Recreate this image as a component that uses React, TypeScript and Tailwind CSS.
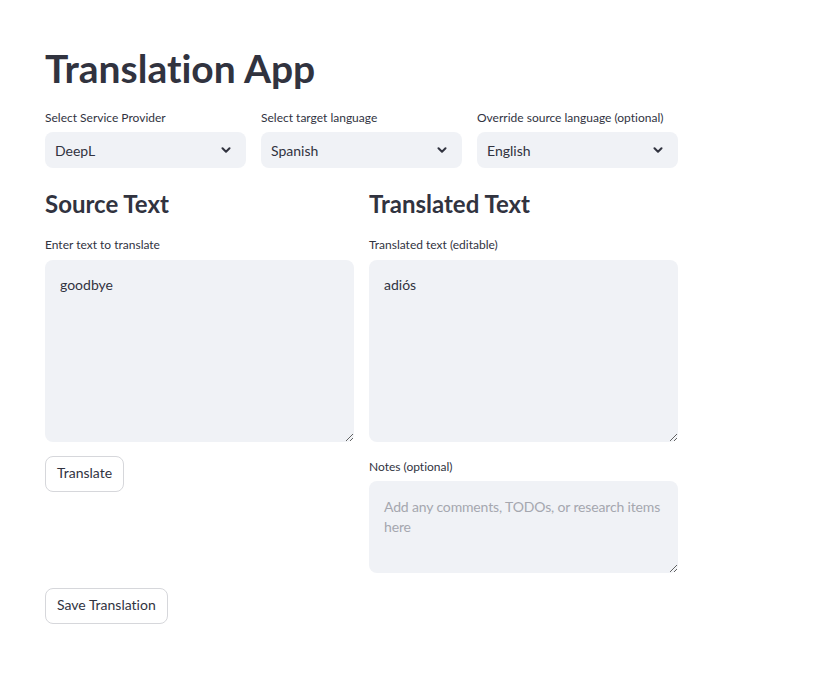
import { useState } from "react";

const PROVIDERS = ["DeepL", "Google", "Microsoft"];
const TARGETS = ["Spanish", "French", "German"];
const SOURCES = ["English", "Spanish", "French"];

function Chevron() {
  return (
    <svg width="10" height="7" viewBox="0 0 10 7" fill="none" className="shrink-0">
      <path d="M1.5 1.3 L5 4.8 L8.5 1.3" stroke="#31333F" strokeWidth="2" strokeLinecap="round" strokeLinejoin="round" />
    </svg>
  );
}

function SelectBox({ label, value }: { label: string; value: string }) {
  return (
    <div className="flex flex-col">
      <div className="text-[12px] leading-[14px] text-[#31333F]">{label}</div>
      <div className="mt-[7px] flex h-[36px] items-center justify-between rounded-[8px] bg-[#f0f2f6] pl-[10px] pr-[15px] text-[14px] text-[#31333F]">
        <span>{value}</span>
        <Chevron />
      </div>
    </div>
  );
}

function Button({ children }: { children: string }) {
  return (
    <button className="flex h-[36px] w-fit items-center rounded-[8px] border border-[#d6d7db] bg-white px-[11px] pb-[2px] text-[14px] leading-[20px] text-[#31333F]">
      {children}
    </button>
  );
}

export default function App() {
  const [source, setSource] = useState("goodbye");
  const [target, setTarget] = useState("adiós");
  const [notes, setNotes] = useState("");

  return (
    <div className="min-h-screen bg-white font-['Lato',sans-serif] text-[#31333F] [font-variant-ligatures:none]">
      <div className="w-[633px] ml-[45px] pt-[44px] pb-[60px]">
        <h1 className="text-[39px] leading-[48px] font-bold">Translation App</h1>

        <div className="mt-[19px] grid grid-cols-3 gap-[15px]">
          <SelectBox label="Select Service Provider" value={PROVIDERS[0]} />
          <SelectBox label="Select target language" value={TARGETS[0]} />
          <SelectBox label="Override source language (optional)" value={SOURCES[0]} />
        </div>

        <div className="mt-[20px] grid grid-cols-2 gap-[15px]">
          {/* Source column */}
          <div className="flex flex-col">
            <h3 className="text-[24px] leading-[32px] font-bold">Source Text</h3>
            <div className="mt-[18px] text-[12px] leading-[14px]">Enter text to translate</div>
            <textarea
              value={source}
              onChange={(e) => setSource(e.target.value)}
              className="mt-[8px] h-[182px] resize-y rounded-[8px] bg-[#f0f2f6] px-[15px] pt-[15px] text-[14px] leading-[20px] text-[#31333F] outline-none"
            />
            <div className="mt-[14px]">
              <Button>Translate</Button>
            </div>
          </div>

          {/* Translated column */}
          <div className="flex flex-col">
            <h3 className="text-[24px] leading-[32px] font-bold">Translated Text</h3>
            <div className="mt-[18px] text-[12px] leading-[14px]">Translated text (editable)</div>
            <textarea
              value={target}
              onChange={(e) => setTarget(e.target.value)}
              className="mt-[8px] h-[182px] resize-y rounded-[8px] bg-[#f0f2f6] px-[15px] pt-[15px] text-[14px] leading-[20px] text-[#31333F] outline-none"
            />
            <div className="mt-[18px] text-[12px] leading-[14px]">Notes (optional)</div>
            <textarea
              value={notes}
              onChange={(e) => setNotes(e.target.value)}
              placeholder={"Add any comments, TODOs, or research items\nhere"}
              className="mt-[7px] h-[92px] resize-y rounded-[8px] bg-[#f0f2f6] pl-[15px] pr-[6px] pt-[16px] text-[14px] leading-[20px] tracking-[-0.15px] text-[#31333F] outline-none placeholder:text-[#a5a7af]"
            />
          </div>
        </div>

        <div className="mt-[15px]">
          <Button>Save Translation</Button>
        </div>
      </div>
    </div>
  );
}
